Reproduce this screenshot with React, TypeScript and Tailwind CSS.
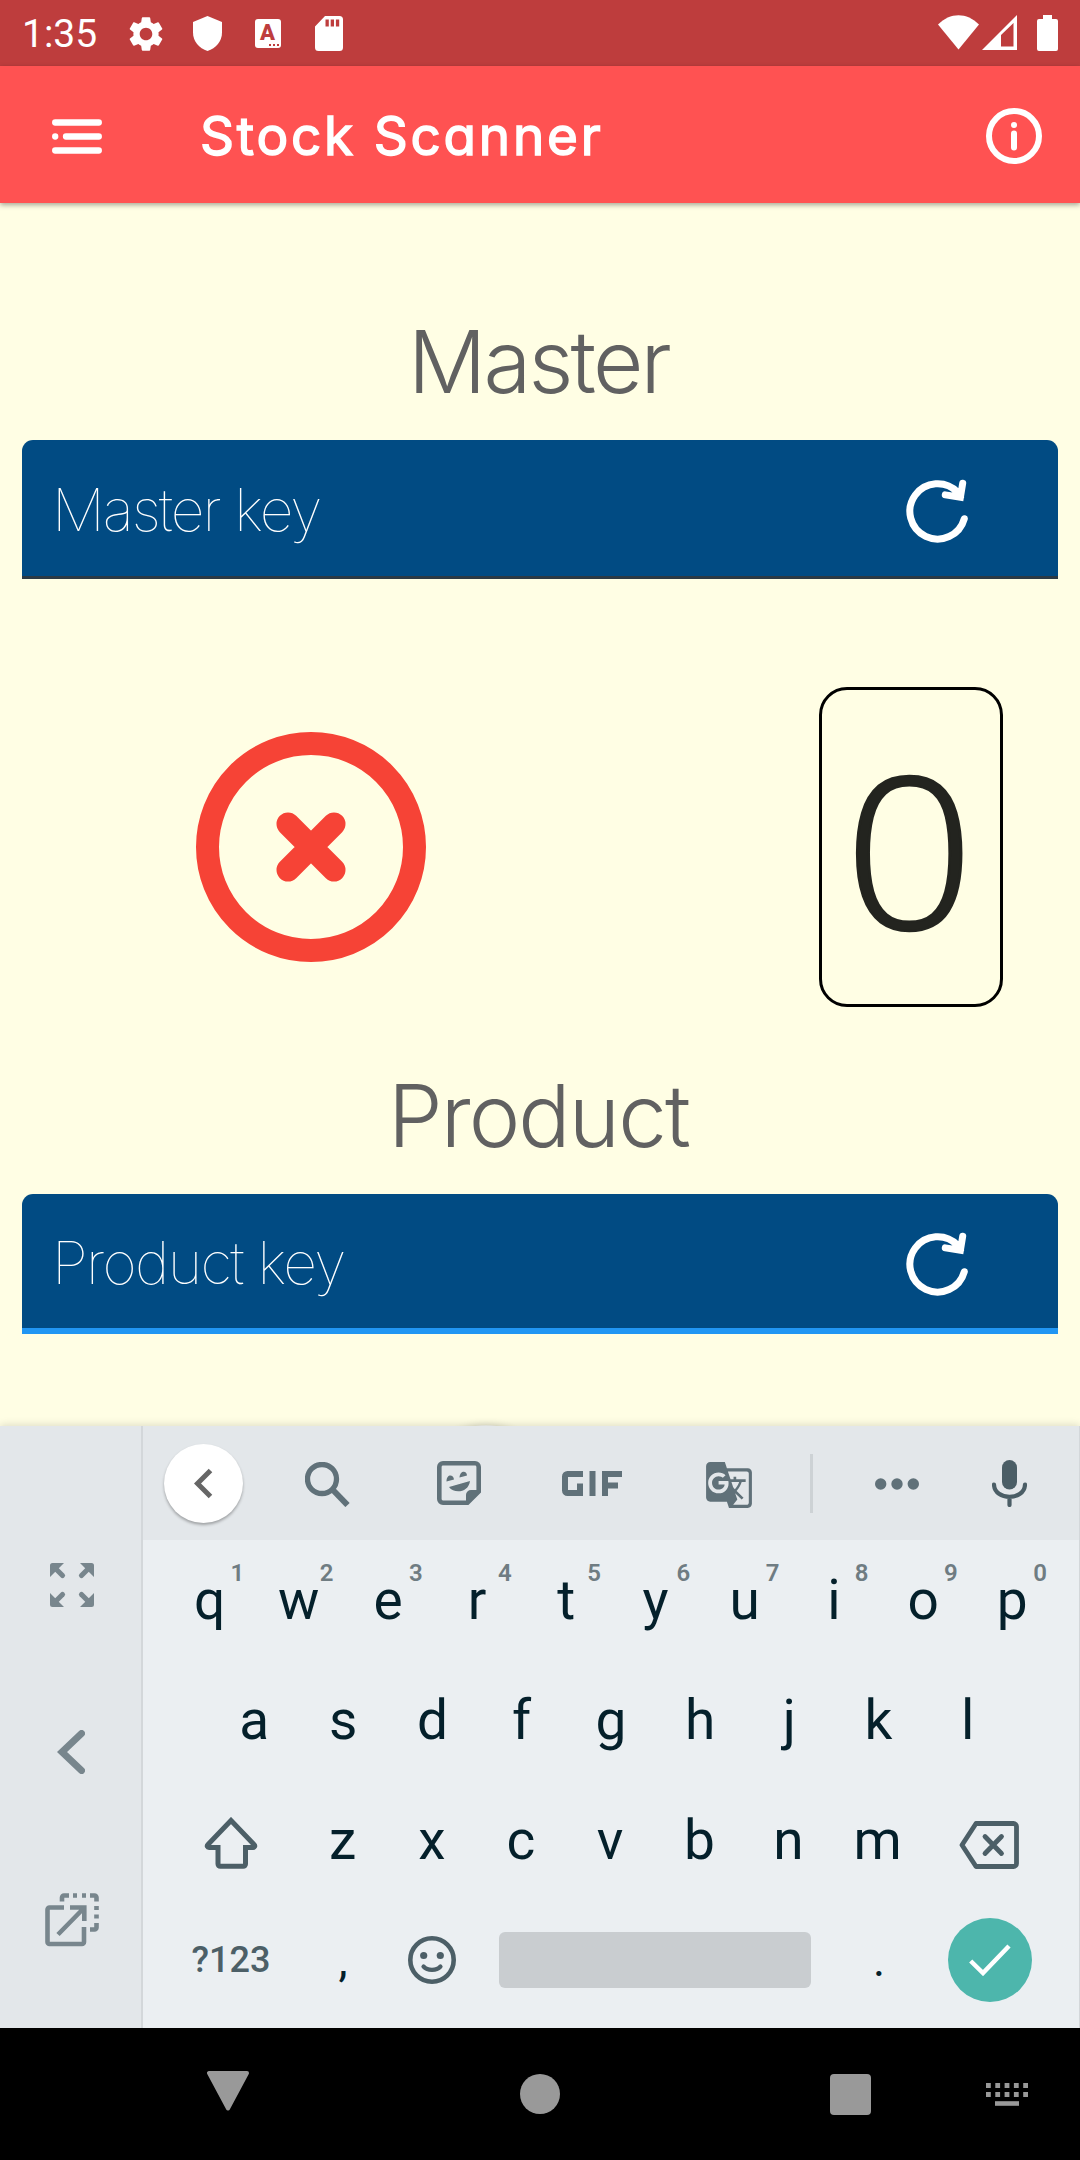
import React from "react";
import { MdGTranslate, MdSettings } from "react-icons/md";

type IconProps = { box: string; w: number; h: number; className?: string; children: React.ReactNode };

function Icon({ box, w, h, className = "", children }: IconProps) {
  return (
    <svg viewBox={box} width={w} height={h} className={`shrink-0 ${className}`} fill="none">
      {children}
    </svg>
  );
}

function StatusBar() {
  return (
    <div className="flex h-[66px] items-start bg-[#be3d3d] text-white">
      <span className="mt-[11px] ml-[22px] w-[105px] text-[39px] leading-[46px]">1:35</span>
      <MdSettings className="mt-[12.5px] -ml-[2px] h-[42px] w-[42px] shrink-0" />
      <Icon box="0 0 29 35" w={29} h={35} className="mt-4 ml-[26px]">
        <path d="M14.500 0 29 6v10.500c0 8.500-6 16-14.500 18.500C6 32.500 0 25 0 16.500V6Z" fill="currentColor" />
      </Icon>
      <div className="relative mt-[19px] ml-[33px] h-[29px] w-[26px] shrink-0 rounded-[3px] bg-white text-[#be3d3d]">
        <span className="absolute top-[4px] left-[5px] text-[22px] leading-[20px] font-black">A</span>
        <span className="absolute right-[2px] bottom-[2px] flex gap-[2px]">
          <i className="h-[2px] w-[2px] bg-[#be3d3d]" />
          <i className="h-[2px] w-[2px] bg-[#be3d3d]" />
          <i className="h-[2px] w-[2px] bg-[#be3d3d]" />
        </span>
      </div>
      <Icon box="0 0 28 35" w={28} h={35} className="mt-4 ml-[34px]">
        <path
          fillRule="evenodd"
          d="M10 0h14.500a3.500 3.500 0 0 1 3.500 3.500v28a3.500 3.500 0 0 1-3.500 3.500h-21A3.500 3.500 0 0 1 0 31.500V10.500ZM10.500 3.500v7h3.300v-7Zm5.200 0v7H19v-7Zm5.200 0v7h3.300v-7Z"
          fill="currentColor"
        />
      </Icon>
      <div className="mr-[22px] ml-auto flex pt-[15px]">
        <Icon box="0 0 41 35" w={41} h={35}>
          <path d="M0 9.500C12-3 29-3 41 9.500L20.500 34.500Z" fill="currentColor" />
        </Icon>
        <Icon box="0 0 35 35" w={35} h={35} className="ml-[3px]">
          <path fillRule="evenodd" d="M0 35 35 0v35ZM19 20v11.500h12.500V8Z" fill="currentColor" />
        </Icon>
        <Icon box="0 0 21 36" w={21} h={36} className="ml-[20.500px]">
          <path d="M6 0h9v4h4a2 2 0 0 1 2 2v28a2 2 0 0 1-2 2H2a2 2 0 0 1-2-2V6a2 2 0 0 1 2-2h4Z" fill="currentColor" />
        </Icon>
      </div>
    </div>
  );
}

function AppBar() {
  return (
    <header className="relative z-10 flex h-[137px] items-center bg-[#ff5252] pt-[3px] pr-[38px] pl-[52px] text-white shadow-[0_2px_5px_rgba(0,0,0,0.35)]">
      <Icon box="0 0 50 35" w={50} h={35}>
        <path d="M3.200 3.500h43.600M14 17.500h32.800M3.200 17.500h.01M3.200 31.500h43.600" stroke="currentColor" strokeWidth="6.300" strokeLinecap="round" />
      </Icon>
      <h1 className="ml-[98px] font-[Inter] text-[53px] leading-[60px] font-normal tracking-[2.800px] whitespace-nowrap [-webkit-text-stroke:1.500px_white] [font-feature-settings:'cv11']">
        Stock Scanner
      </h1>
      <Icon box="0 0 56 56" w={56} h={56} className="-mt-px ml-auto">
        <circle cx="28" cy="28" r="25" stroke="currentColor" strokeWidth="6" />
        <path d="M28 17h.01M28 25.500v14" stroke="currentColor" strokeWidth="6" strokeLinecap="round" />
      </Icon>
    </header>
  );
}

function Field({ label, focused }: { label: string; focused?: boolean }) {
  return (
    <div
      className={
        focused
          ? "mx-[22px] flex h-[140px] items-center rounded-t-[11px] border-b-[6px] border-[#2196f3] bg-[#014b83] pl-[30px]"
          : "mx-[22px] flex h-[139px] items-center rounded-t-[11px] border-b-[3px] border-[#2b3a45] bg-[#014b83] pl-[30px]"
      }
    >
      <span
        className={`mt-[4px] font-[Inter] text-[59px] leading-[72px] font-thin whitespace-nowrap text-white ${
          focused ? "tracking-[-1.700px]" : "tracking-[-2px]"
        }`}
      >
        {label}
      </span>
      <Icon box="905 478 66 66" w={66} h={66} className="mt-[5px] mr-[87px] ml-auto">
        <path
          d="M964.300 518.700A27.700 27.700 0 1 1 957.500 492.100L960.500 497M962.700 483.200 960.400 497.200 945.300 494.900"
          stroke="#fff"
          strokeWidth="7"
          strokeLinecap="round"
        />
      </Icon>
    </div>
  );
}

function Content() {
  return (
    <main className="relative h-[1223px] overflow-hidden bg-[#fffee4]">
      <h2 className="mt-[106px] pr-[3px] text-center font-[Inter] text-[87px] leading-[106px] font-light tracking-[-2.800px] text-[#616161]">
        Master
      </h2>
      <div className="mt-[25px]">
        <Field label="Master key" />
      </div>
      <div className="mt-[108px] flex h-[320px] items-center pr-[77px] pl-[195.500px]">
        <Icon box="0 0 230 230" w={230} h={230}>
          <circle cx="115" cy="115" r="103.500" stroke="#f64336" strokeWidth="23" />
          <path d="m92 92 46 46m0-46-46 46" stroke="#f64336" strokeWidth="23" strokeLinecap="round" />
        </Icon>
        <div className="ml-auto flex h-[320px] w-[184px] items-center justify-center rounded-[28px] border-[3px] border-black">
          <span className="mr-[3px] mb-[1px] scale-x-[1.08] font-['Open_Sans'] text-[211px] leading-[240px] font-light text-[#23241f] [-webkit-text-stroke:2.500px_#23241f]">
            0
          </span>
        </div>
      </div>
      <h2 className="mt-[56px] pr-[3px] text-center font-[Inter] text-[87px] leading-[106px] font-light tracking-[-1.900px] text-[#616161]">
        Product
      </h2>
      <div className="mt-[25px]">
        <Field label="Product key" focused />
      </div>
      <div className="absolute bottom-[-113px] left-[429px] h-[114px] w-[114px] rounded-full bg-[#f1f2ea] shadow-[0_1px_9px_rgba(0,0,0,0.2)]" />
    </main>
  );
}

function SideRail() {
  return (
    <aside className="relative z-10 flex w-[143px] flex-col items-center border-r-2 border-[#d3d7da] bg-[#e3e7ea] text-[#78868d]">
      <Icon box="0 0 44 44" w={44} h={44} className="mt-[137px] ml-[2px]">
        {[0, 90, 180, 270].map((a) => (
          <g key={a} transform={`rotate(${a} 22 22)`}>
            <path d="M2.500 0H14L0 14V2.500a2.500 2.500 0 0 1 2.500-2.500Z" fill="currentColor" />
            <path d="M5 5 12.500 12.500" stroke="currentColor" strokeWidth="5.200" strokeLinecap="round" />
          </g>
        ))}
      </Icon>
      <Icon box="0 0 28 44" w={28} h={44} className="mt-[123px] ml-px">
        <path d="M24.500 3.500 5 22l19.500 18.500" stroke="currentColor" strokeWidth="7" strokeLinecap="round" />
      </Icon>
      <Icon box="0 0 54 54" w={54} h={54} className="mt-[119px] ml-[2px]">
        <path d="M19 14.500H4.500a2 2 0 0 0-2 2V49a2 2 0 0 0 2 2H37a2 2 0 0 0 2-2V34M13 41.500 38 16M25 14.500h14.300V28" stroke="currentColor" strokeWidth="4.600" />
        <path d="M17 8.500V4.500a2 2 0 0 1 2-2h5M28 2.500h4M37 2.500h4M45 2.500h4.500a2 2 0 0 1 2 2v4M51.500 13v4M51.500 21.500v4M51.500 30v4.500a2 2 0 0 1-2 2H45" stroke="currentColor" strokeWidth="4.600" />
      </Icon>
    </aside>
  );
}

function Toolbar() {
  return (
    <div className="flex h-[114px] items-center bg-[#e3e7ea] pl-[21px] text-[#607179]">
      <div className="flex h-[79px] w-[79px] items-center justify-center rounded-full bg-white shadow-[0_2px_3px_rgba(0,0,0,0.3)]">
        <Icon box="0 0 19 31" w={19} h={31}>
          <path d="M16.500 2.500 3.500 15.500l13 13" stroke="#666" strokeWidth="5" />
        </Icon>
      </div>
      <Icon box="0 0 45 45" w={45} h={45} className="mt-[3px] ml-[61.500px]">
        <circle cx="17" cy="17" r="14.500" stroke="currentColor" strokeWidth="5.300" />
        <path d="m27 27 15.500 16" stroke="currentColor" strokeWidth="6" />
      </Icon>
      <Icon box="0 0 44 44" w={44} h={44} className="ml-[87px]">
        <path d="M6 2.300h32a3.700 3.700 0 0 1 3.700 3.700v24.500L30.500 41.700H6A3.700 3.700 0 0 1 2.300 38V6A3.700 3.700 0 0 1 6 2.300Z" stroke="currentColor" strokeWidth="4.600" />
        <path d="M29 42v-8a5 5 0 0 1 5-5h8ZM9.500 20.500c0-8 7-7.500 7.500-2ZM22.500 16.500c.5-7.500 7.500-7 7.500-2ZM12 26l21-6c-1.500 12-16 13-21 6Z" fill="currentColor" />
      </Icon>
      <Icon box="0 0 60 25" w={60} h={25} className="ml-[81px]">
        <path d="M21 3H5.500A2.500 2.500 0 0 0 3 5.500v14A2.500 2.500 0 0 0 5.500 22h12.500V12.500M30.500 0v25M43 25V3h17M43 14.500h13" stroke="currentColor" strokeWidth="6" />
      </Icon>
      <MdGTranslate className="mt-[3px] ml-[82px] h-[50px] w-[50px] shrink-0" />
      <div className="ml-[56px] h-[59px] w-[3px] bg-[#cdd2d5]" />
      <Icon box="0 0 44 12" w={44} h={12} className="mt-[2px] ml-[62px]">
        <circle cx="5.700" cy="6" r="5.700" fill="currentColor" />
        <circle cx="22" cy="6" r="5.700" fill="currentColor" />
        <circle cx="38.300" cy="6" r="5.700" fill="currentColor" />
      </Icon>
      <Icon box="0 0 35 47" w={35} h={47} className="ml-[73px] text-[#4b5e66]">
        <rect x="10" width="15" height="29.500" rx="7.500" fill="currentColor" />
        <path d="M2 24.500c.5 16.500 30.500 16.500 31 0M17.500 37v8" stroke="currentColor" strokeWidth="4.200" strokeLinecap="round" />
      </Icon>
    </div>
  );
}

function Key({ k, hint }: { k: string; hint?: string }) {
  return (
    <div className="relative w-[89.200px] text-center text-[55px] leading-[64px] text-[#04202b]">
      {k}
      {hint && <span className="absolute top-[-9px] left-[65.500px] text-[24px] leading-[28px] font-semibold text-[#6f7c82]">{hint}</span>}
    </div>
  );
}

function Keys() {
  return (
    <div className="flex h-[488px] flex-col bg-[#ebeff2]">
      <div className="flex h-[120px] pt-[28px] pl-[22px]">
        {"qwertyuiop".split("").map((k, i) => (
          <Key key={k} k={k} hint={String((i + 1) % 10)} />
        ))}
      </div>
      <div className="flex h-[120px] pt-[28px] pl-[66.500px]">
        {"asdfghjkl".split("").map((k) => (
          <Key key={k} k={k} />
        ))}
      </div>
      <div className="flex h-[120px] pt-[28px] pl-[61px]">
        <Icon box="0 0 54 52" w={54} h={52} className="mt-[9px] mr-[40px] text-[#4c5f67]">
          <path d="M27 3.500 50 27.500c1.500 1.500.5 3-1 3H41.500v16.500a2.300 2.300 0 0 1-2.300 2.300H16.300A2.300 2.300 0 0 1 14 47V30.500H5c-1.500 0-2.500-1.500-1-3Z" stroke="currentColor" strokeWidth="5" />
        </Icon>
        {"zxcvbnm".split("").map((k) => (
          <Key key={k} k={k} />
        ))}
        <Icon box="0 0 60 48" w={60} h={48} className="mt-[13px] ml-[36.500px] text-[#4c5f67]">
          <path d="M17 2.500h37.500a3 3 0 0 1 3 3v37a3 3 0 0 1-3 3H17L3 24Z" stroke="currentColor" strokeWidth="4.800" strokeLinejoin="round" />
          <path d="m26 15.500 16.500 17M42.500 15.500l-16.500 17" stroke="currentColor" strokeWidth="4.800" strokeLinecap="round" />
        </Icon>
      </div>
      <div className="flex h-[120px] items-center pl-[48px]">
        <span className="w-[80px] text-center text-[36px] leading-[44px] font-medium whitespace-nowrap text-[#4c5f67]">?123</span>
        <span className="ml-[27px] w-[90px] text-center text-[46px] leading-[54px] text-[#04202b]">,</span>
        <Icon box="0 0 48 48" w={48} h={48} className="ml-[20px] text-[#4c5f67]">
          <circle cx="24" cy="24" r="21.700" stroke="currentColor" strokeWidth="4.600" />
          <circle cx="15.700" cy="19.500" r="3.600" fill="currentColor" />
          <circle cx="32.300" cy="19.500" r="3.600" fill="currentColor" />
          <path d="M15.500 30.500c4 4.500 13 4.500 17 0" stroke="currentColor" strokeWidth="4.200" strokeLinecap="round" />
        </Icon>
        <div className="ml-[43px] h-[56px] w-[312px] rounded-[6px] bg-[#c9cdd0]" />
        <span className="ml-[23px] w-[90px] text-center text-[46px] leading-[54px] text-[#04202b]">.</span>
        <div className="ml-[24px] flex h-[84px] w-[84px] items-center justify-center rounded-full bg-[#4db6ac]">
          <Icon box="0 0 42 32" w={42} h={32}>
            <path d="M1.700 17 14 29 40 2" stroke="#fff" strokeWidth="4.500" />
          </Icon>
        </div>
      </div>
    </div>
  );
}

function NavBar() {
  return (
    <nav className="flex h-[132px] bg-black text-[#999]">
      <Icon box="0 0 44 40" w={44} h={40} className="mt-[43px] ml-[206px]">
        <path d="M3 2h38L22 37.500Z" fill="currentColor" stroke="currentColor" strokeWidth="4" strokeLinejoin="round" />
      </Icon>
      <div className="mt-[46px] ml-[270px] h-[40px] w-[40px] rounded-full bg-[#999]" />
      <div className="mt-[46px] ml-[270px] h-[41px] w-[41px] rounded-[4px] bg-[#999]" />
      <Icon box="0 0 42 23" w={42} h={23} className="mt-[55px] ml-[115px]">
        <path d="M0 2.500h42M0 11.500h42" stroke="currentColor" strokeWidth="4.800" strokeDasharray="4.800 4.500" />
        <path d="M9 20.500h24" stroke="currentColor" strokeWidth="4.600" />
      </Icon>
    </nav>
  );
}

export default function App() {
  return (
    <div className="h-[2160px] w-[1080px] overflow-hidden bg-black font-[Roboto,sans-serif]">
      <StatusBar />
      <AppBar />
      <Content />
      <section className="relative flex h-[602px] shadow-[0_-1px_8px_rgba(0,0,0,0.14)]">
        <SideRail />
        <div className="w-[937px] border-r border-[#d3d7da]">
          <Toolbar />
          <Keys />
        </div>
      </section>
      <NavBar />
    </div>
  );
}
